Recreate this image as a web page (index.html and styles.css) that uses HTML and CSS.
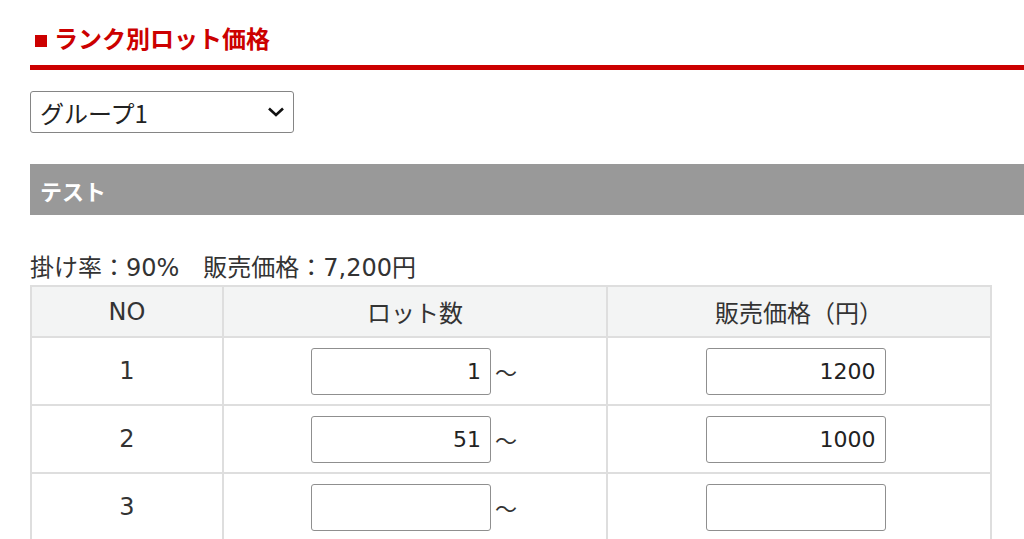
FILE: index.html
```html
<!DOCTYPE html>
<html lang="ja">
<head>
<meta charset="UTF-8" />
<title>ランク別ロット価格</title>
<link rel="stylesheet" href="styles.css">
</head>
<body>
  <div class="page">
    <h2 class="section-title"><span class="title-mark"></span>ランク別ロット価格</h2>

    <div class="select-wrap">
      <select class="group-select" aria-label="グループ">
        <option>グループ1</option>
        <option>グループ2</option>
      </select>
      <svg class="select-arrow" width="18" height="12" viewBox="0 0 18 12" aria-hidden="true">
        <path d="M2 2.5 L9 9 L16 2.5" fill="none" stroke="#111" stroke-width="2.6" />
      </svg>
    </div>

    <div class="rank-bar">テスト</div>

    <p class="rank-info">掛け率：90%　販売価格：7,200円</p>

    <table class="lot-table">
      <thead>
        <tr>
          <th class="col-no">NO</th>
          <th class="col-lot">ロット数</th>
          <th class="col-price">販売価格（円）</th>
        </tr>
      </thead>
      <tbody>
        <tr>
          <td>1</td>
          <td><input class="num-input" type="text" value="1"><span class="tilde">～</span></td>
          <td class="price-cell"><input class="num-input" type="text" value="1200"></td>
        </tr>
        <tr>
          <td>2</td>
          <td><input class="num-input" type="text" value="51"><span class="tilde">～</span></td>
          <td class="price-cell"><input class="num-input" type="text" value="1000"></td>
        </tr>
        <tr>
          <td>3</td>
          <td><input class="num-input" type="text" value=""><span class="tilde">～</span></td>
          <td class="price-cell"><input class="num-input" type="text" value=""></td>
        </tr>
      </tbody>
    </table>
  </div>
</body>
</html>
```

FILE: styles.css
```css
/* base */
* {
  box-sizing: border-box;
}
body {
  margin: 0;
  background: #fff;
  color: #333;
  font-family: "DejaVu Sans", "Noto Sans CJK JP", sans-serif;
  font-size: 24px;
}
.page {
  padding-left: 30px;
}

/* heading */
.section-title {
  margin: 0;
  padding: 20px 0 9px;
  font-family: "Noto Sans CJK JP", sans-serif;
  font-size: 24px;
  line-height: 36px;
  font-weight: 700;
  color: #cc0000;
  border-bottom: 5px solid #cc0000;
}
.title-mark {
  display: inline-block;
  width: 12px;
  height: 12px;
  margin: 0 7px 0 5px;
  background: #cc0000;
  vertical-align: 1px;
}

/* group select */
.select-wrap {
  position: relative;
  width: 264px;
  margin-top: 21px;
}
.group-select {
  appearance: none;
  -webkit-appearance: none;
  display: block;
  width: 264px;
  height: 42px;
  padding: 0 40px 0 9px;
  border: 1px solid #858585;
  border-radius: 3px;
  background: #fff;
  color: #222;
  font-family: "Noto Sans CJK JP", sans-serif;
  font-size: 24px;
}
.select-arrow {
  position: absolute;
  right: 9px;
  top: 15px;
  pointer-events: none;
}

/* rank header */
.rank-bar {
  margin-top: 31px;
  height: 51px;
  padding: 0 10px;
  display: flex;
  align-items: center;
  background: #999;
  color: #fff;
  font-family: "Noto Sans CJK JP", sans-serif;
  font-size: 22px;
  font-weight: 700;
}
.rank-info {
  margin: 38px 0 2px;
  line-height: 30px;
}

/* lot table */
.lot-table {
  width: 962px;
  border-collapse: collapse;
  table-layout: fixed;
}
.lot-table th,
.lot-table td {
  border: 2px solid #dedede;
  text-align: center;
  vertical-align: middle;
  padding: 0;
}
.lot-table th {
  height: 51px;
  background: #f3f4f4;
  font-weight: 400;
}
.lot-table td {
  height: 68px;
}
.col-no {
  width: 20%;
}
.col-lot,
.col-price {
  width: 40%;
}
.num-input {
  width: 180px;
  height: 47px;
  padding: 0 9px;
  border: 1px solid #8f8f8f;
  border-radius: 3px;
  text-align: right;
  vertical-align: middle;
  color: #222;
  font-family: "DejaVu Sans", sans-serif;
  font-size: 22px;
}
.tilde {
  display: inline-block;
  width: 28px;
  vertical-align: middle;
  font-family: "Noto Sans CJK JP", sans-serif;
  font-size: 22px;
  text-align: left;
  padding-left: 4px;
}
.price-cell {
  padding-right: 7px !important;
}
```
